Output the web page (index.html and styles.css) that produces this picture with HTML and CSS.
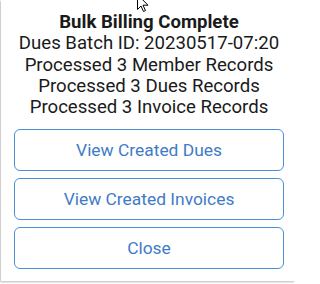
FILE: index.html
```html
<!DOCTYPE html>
<html>
<head>
<meta charset="utf-8">
<link rel="stylesheet" href="styles.css">
</head>
<body>
<div class="dialog">
  <div class="summary">
    <div class="title">Bulk Billing Complete</div>
    <div class="line">Dues Batch ID: 20230517-07:20</div>
    <div class="line">Processed 3 Member Records</div>
    <div class="line">Processed 3 Dues Records</div>
    <div class="line">Processed 3 Invoice Records</div>
  </div>
  <div class="actions">
    <button class="btn">View Created Dues</button>
    <button class="btn">View Created Invoices</button>
    <button class="btn">Close</button>
  </div>
  <svg class="cursor" width="12" height="19" viewBox="0 0 12 19">
    <path d="M0.5 0.5 L0.5 15.5 L4 12 L6.5 17.5 L8.5 16.6 L6 11.2 L11 11.2 Z" fill="#fff" stroke="#000" stroke-width="1" stroke-linejoin="miter"/>
  </svg>
</div>
</body>
</html>
```
FILE: styles.css
```css
html, body {
  margin: 0;
  padding: 0;
  background: #ffffff;
}
body {
  width: 295px;
  height: 284px;
  overflow: hidden;
  font-family: Roboto, "Liberation Sans", sans-serif;
}
.dialog {
  position: relative;
  margin-left: 1px;
  width: 294px;
  height: 281px;
  background: #fff;
  box-shadow: -1px 1px 2px rgba(0,0,0,0.28);
  box-sizing: border-box;
  padding: 12px 11px 0 13px;
}
.summary {
  text-align: center;
  color: #1a1a1a;
  font-size: 18.6px;
  line-height: 21.3px;
}
.title {
  font-weight: bold;
}
.actions {
  margin-top: 11px;
  display: flex;
  flex-direction: column;
  gap: 7px;
}
.btn {
  height: 42px;
  width: 100%;
  background: #fff;
  border: 1px solid #4a90d9;
  border-radius: 6px;
  color: #3f7bc6;
  font-family: Roboto, "Liberation Sans", sans-serif;
  font-size: 17.4px;
  padding: 0;
}
.cursor {
  position: absolute;
  left: 136px;
  top: -6px;
}
```
